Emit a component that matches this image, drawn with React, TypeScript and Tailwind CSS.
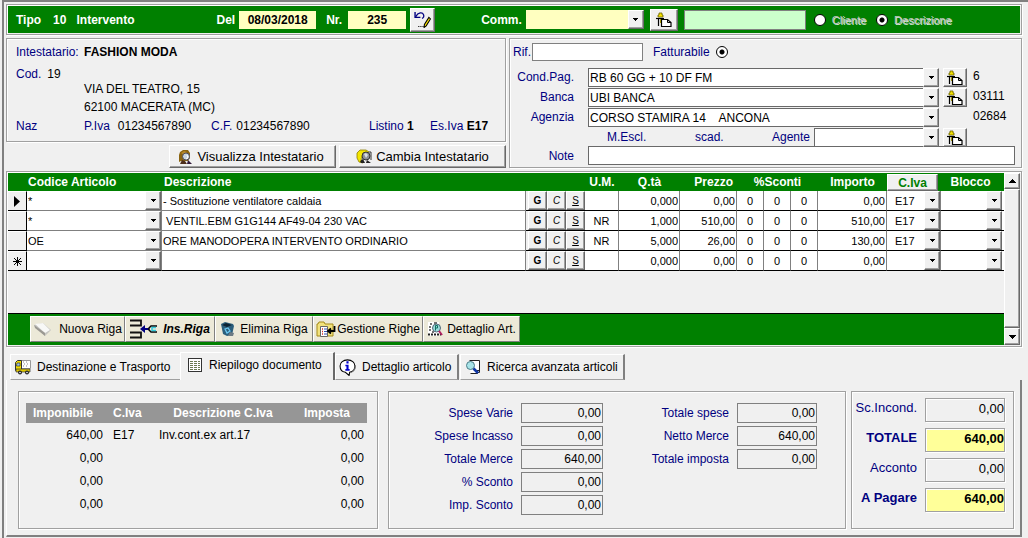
import React from 'react';
import clsx from 'clsx';

const etched =
  'border border-[#a0a0a0] shadow-[inset_1px_1px_0_#fff,1px_1px_0_#fff]';
const raised =
  'border border-t-white border-l-white border-r-[#696969] border-b-[#696969] bg-[#f0f0f0] shadow-[inset_-1px_-1px_0_#a0a0a0] cursor-pointer';

const rows = [
  { code: '*', desc: '- Sostituzione ventilatore caldaia', um: '', qty: '0,000', price: '0,00', total: '0,00', vat: 'E17' },
  { code: '*', desc: ' VENTIL.EBM G1G144 AF49-04 230 VAC', um: 'NR', qty: '1,000', price: '510,00', total: '510,00', vat: 'E17' },
  { code: 'OE', desc: 'ORE MANODOPERA INTERVENTO ORDINARIO', um: 'NR', qty: '5,000', price: '26,00', total: '130,00', vat: 'E17' },
  { code: '', desc: '', um: '', qty: '0,000', price: '0,00', total: '0,00', vat: '' },
];

const vatRows = [
  { base: '640,00', code: 'E17', desc: 'Inv.cont.ex art.17', tax: '0,00' },
  { base: '0,00', code: '', desc: '', tax: '0,00' },
  { base: '0,00', code: '', desc: '', tax: '0,00' },
  { base: '0,00', code: '', desc: '', tax: '0,00' },
];

const expenses = [
  ['Spese Varie', '0,00'],
  ['Spese Incasso', '0,00'],
  ['Totale Merce', '640,00'],
  ['% Sconto', '0,00'],
  ['Imp. Sconto', '0,00'],
];

const totals = [
  ['Totale spese', '0,00'],
  ['Netto Merce', '640,00'],
  ['Totale imposta', '0,00'],
];

/* ---------- icons ---------- */

const Icon = ({ children, size = 16 }: any) => (
  <svg width={size} height={size} viewBox="0 0 16 16" className="shrink-0" aria-hidden="true">
    {children}
  </svg>
);

const Arrow = ({ up }: any) => (
  <svg width="7" height="4" viewBox="0 0 7 4" shapeRendering="crispEdges" aria-hidden="true">
    <path d={up ? 'M0 4h7L3.5 0z' : 'M0 0h7L3.5 4z'} />
  </svg>
);

const PinPageIcon = () => (
  <Icon>
    <path d="M5.500 7.500h6l3.500 3v4H5.500z" fill="#fff" stroke="#000" strokeWidth="1.200" />
    <path d="M11.500 7.500v3H15" fill="none" stroke="#000" />
    <path d="M3 1h3v2h1v2H2V3h1z" fill="#f4e000" stroke="#6b6200" strokeWidth=".8" />
    <path d="M0 6.500h8" stroke="#000" strokeWidth="1.200" />
    <path d="M2.500 7v7" stroke="#000" strokeWidth="1.200" />
    <path d="M4.500 7v4" stroke="#a09400" />
  </Icon>
);

const UndoPencilIcon = () => (
  <Icon size={17}>
    <path d="M1 1v5h5" fill="none" stroke="#000080" strokeWidth="1.300" />
    <path d="M1.500 5.500C4 1 8 1 9 3.500c.6 1.500 0 3-1.500 3.500" fill="none" stroke="#000080" strokeWidth="1.200" />
    <path d="M14 6l1.500 1.500-4 6.500-2 1.500.3-2.800z" fill="#ffe800" stroke="#000" />
    <path d="M4 14.500h1M6 14.500h1M8 14.500h1" stroke="#000" />
  </Icon>
);

const PersonIcon = () => (
  <Icon>
    <path d="M3 3l3-2h5l2 3v5l-2 3H4L2 13V6z" fill="#8a6410" />
    <path d="M4 4l3-2 3 1-3 3z" fill="#b88a2c" />
    <circle cx="9" cy="7.500" r="3.500" fill="#c9d6e0" stroke="#4c4c5c" />
    <path d="M10 6l1 3-2 1" fill="none" stroke="#fff" />
    <path d="M3 15l2-4 3 1 2 3z" fill="#4d2f1c" />
    <path d="M11 11l4 4h-5z" fill="#301838" />
  </Icon>
);

const PersonChangeIcon = () => (
  <Icon>
    <path d="M1 4l3-3h6l3 2-6 3-2 4 2 4-4-1-2-4z" fill="#f4e600" stroke="#8a7c00" strokeWidth=".8" />
    <circle cx="10" cy="7" r="4" fill="#8b8f96" stroke="#333" />
    <path d="M8 5l2-1 2 2-2 3z" fill="#d8dde2" />
    <path d="M4 12l3-2 2 4H5zM11 11l4 3h-5z" fill="#222" />
    <path d="M13 3h2v8" fill="none" stroke="#333" />
  </Icon>
);

const EraserIcon = () => (
  <svg width="20" height="16" viewBox="0 0 20 16" className="shrink-0" aria-hidden="true">
    <path d="M1 4l9-2 8 7-6 6z" fill="#c4c4c0" />
    <path d="M2 3l8-1 7 7-5 3z" fill="#f8f8f6" />
    <path d="M1 4l1 3 10 8v-3z" fill="#9a9892" />
  </svg>
);

const InsertRowIcon = () => (
  <svg width="27" height="20" viewBox="0 0 27 20" className="shrink-0" aria-hidden="true">
    <path d="M0 1.500h11v5H0M0 18.500h11v-5H0" fill="none" stroke="#111" strokeWidth="1.800" />
    <path d="M10 10l5-4v3h4v2h-4v3z" fill="#000080" />
    <path d="M27 7h-6l-2 2v2l2 2h6" fill="none" stroke="#000" strokeWidth="1.500" />
    <path d="M26 8.500h-4v3h4" fill="none" stroke="#30c8d8" strokeWidth="1.500" />
  </svg>
);

const BinIcon = () => (
  <Icon>
    <path d="M1 3l4-2 8 2 1 2-2 9-5 1-4-2z" fill="#2c5f7c" />
    <path d="M2 4l4-2 6 2-5 2z" fill="#0d2433" />
    <path d="M5 8l3-1 2 3-3 2z" fill="none" stroke="#6cc8f0" strokeWidth="1.300" />
    <path d="M10 11l4 1-1 3H8z" fill="#6d7c84" />
  </Icon>
);

const FolderIcon = () => (
  <svg width="20" height="17" viewBox="0 0 20 17" className="shrink-0" aria-hidden="true">
    <path d="M1 3h1l1-2h5l1 2h8v12H1z" fill="#f2e27c" stroke="#a58b18" />
    <path d="M4.500 5.500h7v10h-7z" fill="#fff" stroke="#666" />
    <path d="M6 8h1M6 10.500h1M6 13h1" stroke="#d03020" strokeWidth="1.300" />
    <path d="M8 8h3M8 10.500h3M8 13h3" stroke="#3050b0" />
    <path d="M18.500 5v5h-5M15 7.500l-3 2.500 3 2.500" fill="none" stroke="#000" strokeWidth="1.800" />
  </svg>
);

const DetailIcon = () => (
  <Icon>
    <path d="M1 1h11v14H1z" fill="#fff" />
    <path d="M1 13.500h13" stroke="#222" strokeWidth="2" strokeDasharray="2 1" />
    <path d="M2 9h2M2 6h2M5 11h2M3 3h2M7 2h3" stroke="#444" strokeWidth="1.500" />
    <circle cx="9.500" cy="7" r="4" fill="#9adada" stroke="#567" />
    <path d="M8.500 9.500v-5h2v2.500h-2" fill="none" stroke="#107060" />
    <path d="M12 10l3 4" stroke="#b02060" strokeWidth="2" />
  </Icon>
);

const TruckIcon = () => (
  <Icon>
    <path d="M6.500 1.500h9v8h-9z" fill="#fff" stroke="#999" />
    <path d="M8 3h1M11 3h1M9 5h1M12 5h1M8 7h1M11 7h1" stroke="#888" />
    <path d="M.5 3.500l2-2h4v10h-6z" fill="#f0dc00" stroke="#333" />
    <path d="M2 4h3v3H1.500z" fill="#9fc8e8" stroke="#333" strokeWidth=".7" />
    <path d="M1 10h14v3H1z" fill="#e0c800" stroke="#333" strokeWidth=".7" />
    <circle cx="5" cy="13.500" r="2" fill="#222" />
    <circle cx="12" cy="13.500" r="2" fill="#222" />
    <circle cx="5" cy="13.500" r=".8" fill="#fff" />
    <circle cx="12" cy="13.500" r=".8" fill="#fff" />
  </Icon>
);

const SheetIcon = () => (
  <Icon>
    <g shapeRendering="crispEdges">
      <path d="M1 1h13v13H1z" fill="#fff" />
      <path d="M1 1.500h14M14.500 1v14M1 14.500h14M1.500 1v14" stroke="#333" />
      <path d="M3 4.500h3M7 4.500h3M11 4.500h2M3 6.500h3M7 6.500h3M11 6.500h2M3 8.500h3M7 8.500h3M11 8.500h2M3 10.500h3M7 10.500h3M11 10.500h2M3 12.500h3M7 12.500h3M11 12.500h2" stroke="#6b7a50" />
    </g>
  </Icon>
);

const InfoIcon = () => (
  <Icon size={17}>
    <path d="M8 .8c4 0 7 2.400 7 5.700S12.500 12 10 12.500L9.500 15.500 6 12.500C3 12 1 9.500 1 6.500 1 3.200 4 .8 8 .8z" fill="#fff" stroke="#000" />
    <path d="M15.500 6c.3 4-3 6.500-5 7" fill="none" stroke="#777" />
    <path d="M7 2.200h2v2H7zM6 5.300h3v4h1V11H6V9.300h1V6.800H6z" fill="#0000d0" />
  </Icon>
);

const SearchDocIcon = () => (
  <Icon>
    <path d="M4.500 1.500h10v12h-2v1h-7" fill="#fff" stroke="#222" />
    <path d="M11.500 14.500v-3h3" fill="none" stroke="#222" />
    <circle cx="5.500" cy="6.500" r="4" fill="#a8e4e8" stroke="#4a7c88" />
    <path d="M8.500 9.500l4.500 4.500" stroke="#1038a8" strokeWidth="2.600" />
  </Icon>
);

/* ---------- controls ---------- */

const Combo = ({ id, label, value, className, selectClass = 'pl-px' }: any) => (
  <div className={clsx('relative', className)}>
    <select
      id={id}
      aria-label={label}
      defaultValue={value}
      className={clsx('block h-full w-full appearance-none pr-4 whitespace-pre outline-none', selectClass)}
    >
      <option value={value}>{value}</option>
    </select>
    <span
      className={clsx(raised, 'pointer-events-none absolute right-0 top-0 bottom-0 flex w-4 items-center justify-center')}
    >
      <svg width="5" height="3" viewBox="0 0 5 3" shapeRendering="crispEdges" aria-hidden="true">
        <path d="M0 0h5L2.500 3z" />
      </svg>
    </span>
  </div>
);

const LookupButton = ({ label, className }: any) => (
  <button type="button" aria-label={label} className={clsx(raised, 'flex shrink-0 items-center justify-center', className)}>
    <PinPageIcon />
  </button>
);

const Radio = (props: any) => (
  <input
    type="radio"
    className="h-3 w-3 appearance-none rounded-full border border-black bg-white checked:bg-[radial-gradient(circle,#000_2px,#fff_3px)]"
    {...props}
  />
);

const CellInput = ({ label, value, className }: any) => (
  <input
    aria-label={label}
    defaultValue={value}
    className={clsx('block h-[19px] w-full bg-white px-px outline-none', className)}
  />
);

const AmountRow = ({ label, value }: any) => {
  const id = label.replace(/\W/g, '');
  return (
    <>
      <label htmlFor={id} className="text-right text-[#000080]">
        {label}
      </label>
      <input
        id={id}
        readOnly
        value={value}
        className="h-5 w-full border border-[#808080] px-px text-right outline-none"
      />
    </>
  );
};

const SummaryRow = ({ label, value, strong }: any) => {
  const id = label.replace(/\W/g, '');
  return (
    <div className={clsx('flex items-start justify-end gap-2', strong && 'font-bold')}>
      <label htmlFor={id} className="pt-0.5 text-[#000080]">
        {label}
      </label>
      <input
        id={id}
        readOnly
        value={value}
        className={clsx(etched, 'h-6 w-20 pb-1 text-right outline-none', strong && 'bg-[#ffff99]')}
      />
    </div>
  );
};

const ToolButton = ({ icon, children, className }: any) => (
  <button
    type="button"
    className={clsx(
      'flex h-[26px] items-center justify-center border border-t-white border-l-white border-r-[#808080] border-b-[#808080] bg-[#ece9d8] whitespace-nowrap cursor-pointer',
      className,
    )}
  >
    {icon}
    {children}
  </button>
);

const Tab = ({ icon, children, active, className }: any) => (
  <button
    type="button"
    role="tab"
    aria-selected={Boolean(active)}
    className={clsx(
      'flex items-center gap-1.5 border-l border-t border-white whitespace-nowrap cursor-pointer',
      active ? 'h-7 border-r-2 border-r-[#696969] pb-1' : 'h-[26px] border-b border-b-[#a0a0a0]',
      className,
    )}
  >
    {icon}
    {children}
  </button>
);

/* ---------- sections ---------- */

const TopBar = () => (
  <div className={clsx(etched, 'p-px')}>
    <header className="flex h-[27px] items-center bg-[#008000] pl-2 font-bold text-white">
      <span>Tipo</span>
      <span className="ml-3">10</span>
      <span className="ml-2.5">Intervento</span>
      <label htmlFor="del" className="ml-[82px]">Del</label>
      <input
        id="del"
        defaultValue="08/03/2018"
        className="ml-1 h-[18px] w-[77px] bg-[#ffffc0] text-center text-black outline-none"
      />
      <label htmlFor="nr" className="ml-2.5">Nr.</label>
      <input
        id="nr"
        defaultValue="235"
        className="ml-1.5 h-[18px] w-[58px] bg-[#ffffc0] text-center text-black outline-none"
      />
      <button type="button" aria-label="Modifica numero" className={clsx(raised, 'ml-1 flex h-6 w-[25px] items-center justify-center')}>
        <UndoPencilIcon />
      </button>
      <label htmlFor="comm" className="ml-[46px]">Comm.</label>
      <Combo id="comm" value="" className="ml-1 h-[19px] w-[118px] text-black" selectClass="bg-[#ffffc0]" />
      <LookupButton label="Cerca commessa" className="ml-1.5 h-[22px] w-7" />
      <input
        aria-label="Ricerca"
        className="ml-1.5 h-5 w-[122px] border border-[#808080] bg-[#ccffcc] text-black outline-none"
      />
      <div className="ml-2 flex items-center gap-1.5 text-[11px] font-normal text-[#c4c4c4] [text-shadow:1px_1px_0_#d8e8d8]">
        <Radio id="cliente" name="cerca" />
        <label htmlFor="cliente" className="mr-1">Cliente</label>
        <Radio id="descrizione" name="cerca" defaultChecked />
        <label htmlFor="descrizione">Descrizione</label>
      </div>
    </header>
  </div>
);

const CustomerPanel = () => (
  <div className="flex w-[500px] shrink-0 flex-col">
    <section className={clsx(etched, 'flex h-[104px] flex-col pl-[9px] pt-[5px] leading-4')}>
      <p className="flex">
        <span className="w-[68px] text-[#000080]">Intestatario:</span>
        <b>FASHION MODA</b>
      </p>
      <p className="mt-1.5">
        <span className="mr-1.5 text-[#000080]">Cod.</span>19
      </p>
      <p className="-mt-px pl-[68px]">VIA DEL TEATRO, 15</p>
      <p className="mt-0.5 pl-[68px]">62100 MACERATA (MC)</p>
      <div className="mt-[3px] flex">
        <span className="w-[68px] text-[#000080]">Naz</span>
        <span className="w-[127px]">
          <span className="mr-2 text-[#000080]">P.Iva</span>01234567890
        </span>
        <span className="w-[158px]">
          <span className="mr-1 text-[#000080]">C.F.</span>01234567890
        </span>
        <span className="w-[61px]">
          <span className="text-[#000080]">Listino</span> <b>1</b>
        </span>
        <span>
          <span className="text-[#000080]">Es.Iva</span> <b>E17</b>
        </span>
      </div>
    </section>
    <div className="mt-[3px] flex justify-end gap-[3px] text-[13px]">
      <button type="button" className={clsx(raised, 'flex h-[23px] w-[167px] items-center justify-center gap-1 pr-1')}>
        <PersonIcon />
        Visualizza Intestatario
      </button>
      <button type="button" className={clsx(raised, 'flex h-[23px] w-[167px] items-center justify-center gap-1')}>
        <PersonChangeIcon />
        Cambia Intestatario
      </button>
    </div>
  </div>
);

const PaymentRow = ({ id, label, value, code, lookup }: any) => (
  <div className="flex h-5 items-start">
    <label htmlFor={id} className="w-16 text-right leading-[18px] text-[#000080]">
      {label}
    </label>
    <Combo id={id} value={value} className="ml-[14px] h-[19px] flex-1" selectClass="border border-[#696969] bg-white pl-px" />
    <div className="ml-1 w-6">{lookup && <LookupButton label={`Cerca ${label}`} className="h-[19px] w-6" />}</div>
    <span className="ml-1.5 w-[48px] leading-4">{code}</span>
  </div>
);

const PaymentPanel = () => (
  <section className={clsx(etched, 'min-w-0 flex-1 pt-1')}>
    <div className="mb-[7px] flex items-center text-[#000080]">
      <label htmlFor="rif" className="w-[22px] pl-[3px]">Rif.</label>
      <input id="rif" className="h-[18px] w-[111px] border border-[#808080] bg-white text-black outline-none" />
      <label htmlFor="fatturabile" className="ml-2.5 mr-1.5">Fatturabile</label>
      <Radio id="fatturabile" name="fatturabile" defaultChecked />
    </div>
    <PaymentRow id="condpag" label="Cond.Pag." value="RB 60 GG + 10 DF FM" code="6" lookup />
    <PaymentRow id="banca" label="Banca" value="UBI BANCA" code="03111" lookup />
    <PaymentRow id="agenzia" label="Agenzia" value={'CORSO STAMIRA 14\u00a0\u00a0\u00a0 ANCONA'} code="02684" />
    <div className="flex h-[18px] items-start leading-[18px] text-[#000080]">
      <span className="ml-[97px] w-[88px]">M.Escl.</span>
      <span className="flex-1">scad.</span>
      <label htmlFor="agente">Agente</label>
      <Combo id="agente" value="" className="ml-1 h-[19px] w-[125px]" selectClass="border border-[#696969] bg-white" />
      <LookupButton label="Cerca agente" className="ml-1 mr-[54px] h-[19px] w-6" />
    </div>
    <div className="flex items-center">
      <label htmlFor="note" className="w-16 text-right text-[#000080]">Note</label>
      <input id="note" className="ml-[14px] mr-[6px] h-[19px] flex-1 border border-[#696969] bg-white outline-none" />
    </div>
  </section>
);

const ItemsGrid = () => {
  const num = 'border-b border-r border-b-black border-r-[#808080] bg-white p-0';
  return (
    <table className="w-full table-fixed border-separate border-spacing-0 text-[11px]">
      <colgroup>
        <col className="w-[19px]" />
        <col className="w-[135px]" />
        <col />
        <col className="w-[59px]" />
        <col className="w-[34px]" />
        <col className="w-[61px]" />
        <col className="w-[57px]" />
        <col className="w-[27px]" />
        <col className="w-[27px]" />
        <col className="w-[27px]" />
        <col className="w-[69px]" />
        <col className="w-[54px]" />
        <col className="w-[63px]" />
      </colgroup>
      <thead>
        <tr className="h-[18px] bg-[#008000] text-[12px] leading-4 text-white">
          <th className="p-0" />
          <th className="p-0 pl-px text-left">Codice Articolo</th>
          <th className="p-0 pl-0.5 text-left">Descrizione</th>
          <th className="p-0" />
          <th className="p-0">U.M.</th>
          <th className="p-0">Q.tà</th>
          <th className="p-0 pr-1 text-right">Prezzo</th>
          <th className="p-0" colSpan={3}>%Sconti</th>
          <th className="p-0">Importo</th>
          <th className="p-0">
            <button type="button" className={clsx(raised, 'block h-[17px] w-[51px] leading-4 text-[#008000]')}>
              C.Iva
            </button>
          </th>
          <th className="p-0 pr-1">Blocco</th>
        </tr>
      </thead>
      <tbody>
        {rows.map((row, i) => {
          const last = i === rows.length - 1;
          const line = last ? 'border-b-black' : 'border-b-[#808080]';
          return (
            <tr key={i} className="h-5">
              <td className="border-b border-r border-t border-black border-t-white bg-[#f0f0f0] p-0">
                <div className="flex justify-center">
                  {i === 0 && (
                    <svg width="6" height="11" viewBox="0 0 6 11" aria-hidden="true">
                      <path d="M0 0l6 5.500L0 11z" />
                    </svg>
                  )}
                  {last && (
                    <svg width="9" height="9" viewBox="0 0 9 9" stroke="#000" aria-hidden="true">
                      <path d="M4.500 0v9M0 4.500h9M1 1l7 7M8 1L1 8" />
                    </svg>
                  )}
                </div>
              </td>
              <td className={clsx('border-b border-r border-r-[#808080] bg-white p-0', line)}>
                <Combo label="Codice articolo" value={row.code} className="h-[19px]" />
              </td>
              <td className={clsx('border-b border-r border-r-[#808080] bg-white p-0', line)}>
                <CellInput label="Descrizione" value={row.desc} />
              </td>
              <td className="border-b border-black p-0 pl-0.5">
                <div className="flex text-[10px]">
                  <button type="button" className={clsx(raised, 'h-[19px] w-[19px] font-bold')}>G</button>
                  <button type="button" className={clsx(raised, 'h-[19px] w-[19px] italic')}>C</button>
                  <button type="button" className={clsx(raised, 'h-[19px] w-[19px] underline')}>S</button>
                </div>
              </td>
              <td className={num}>
                <CellInput label="U.M." value={row.um} className="text-center" />
              </td>
              <td className={num}>
                <CellInput label="Quantità" value={row.qty} className="text-right" />
              </td>
              <td className={num}>
                <CellInput label="Prezzo" value={row.price} className="text-right" />
              </td>
              {[1, 2, 3].map((n) => (
                <td key={n} className={num}>
                  <CellInput label={`Sconto ${n}`} value="0" className="text-center" />
                </td>
              ))}
              <td className={num}>
                <CellInput label="Importo" value={row.total} className="text-right" />
              </td>
              <td className={num}>
                <Combo label="Codice Iva" value={row.vat} className="h-[19px]" selectClass="pl-2" />
              </td>
              <td className="border-b border-black bg-white p-0 pr-0.5">
                <Combo label="Blocco" value="" className="h-[19px]" />
              </td>
            </tr>
          );
        })}
      </tbody>
    </table>
  );
};

const ItemsSection = () => (
  <section className={clsx(etched, 'mt-[3px] flex p-px')}>
    <div className="flex min-w-0 flex-1 flex-col">
      <ItemsGrid />
      <div className="mt-[42px] flex border-t border-black bg-[#008000] pb-[3px] pl-[22px] pt-0.5">
        <ToolButton icon={<EraserIcon />} className="w-[95px] gap-1.5">Nuova Riga</ToolButton>
        <ToolButton icon={<InsertRowIcon />} className="w-[90px] gap-1.5">
          <i className="font-bold">Ins.Riga</i>
        </ToolButton>
        <ToolButton icon={<BinIcon />} className="w-[98px] gap-1">Elimina Riga</ToolButton>
        <ToolButton icon={<FolderIcon />} className="w-[110px] gap-px">Gestione Righe</ToolButton>
        <ToolButton icon={<DetailIcon />} className="w-[97px] gap-1">Dettaglio Art.</ToolButton>
      </div>
    </div>
    <div className="flex w-4 flex-col">
      <button type="button" aria-label="Scorri su" className={clsx(raised, 'flex h-4 items-center justify-center')}>
        <Arrow up />
      </button>
      <div className={clsx(raised, 'flex-1')} />
      <button type="button" aria-label="Scorri giù" className={clsx(raised, 'flex h-[17px] items-center justify-center')}>
        <Arrow />
      </button>
    </div>
  </section>
);

const SummaryTabs = () => (
  <section className="mt-[5px]">
    <div role="tablist" className="flex items-end pl-1">
      <Tab icon={<TruckIcon />} className="w-[170px] pl-1">Destinazione e Trasporto</Tab>
      <Tab icon={<SheetIcon />} active className="w-[155px] pl-1.5">Riepilogo documento</Tab>
      <Tab icon={<InfoIcon />} className="w-[124px] border-r-2 border-r-[#808080] pl-[3px]">Dettaglio articolo</Tab>
      <Tab icon={<SearchDocIcon />} className="ml-px w-[165px] border-r-2 border-r-[#808080] pl-1">
        Ricerca avanzata articoli
      </Tab>
    </div>
    <div className="flex border-b-2 border-l border-r-2 border-b-[#808080] border-l-white border-r-[#808080] pb-[6px] pl-[11px] pr-[6px] pt-[11px]">
      <div className={clsx(etched, 'h-[138px] w-[360px] pl-[7px] pr-2.5 pt-[11px]')}>
        <table className="w-full table-fixed">
          <colgroup>
            <col className="w-[83px]" />
            <col className="w-[50px]" />
            <col />
            <col className="w-[80px]" />
          </colgroup>
          <thead>
            <tr className="h-5 bg-[#969696] text-white">
              <th className="p-0 pl-[7px] text-left">Imponibile</th>
              <th className="p-0 pl-1 text-left">C.Iva</th>
              <th className="p-0">Descrizione C.Iva</th>
              <th className="p-0">Imposta</th>
            </tr>
          </thead>
          <tbody>
            {vatRows.map((row, i) => (
              <tr key={i} className="h-[23px]">
                <td className="p-0 pr-1.5 text-right">{row.base}</td>
                <td className="p-0 pl-1">{row.code}</td>
                <td className="p-0">{row.desc}</td>
                <td className="p-0 pr-[3px] text-right">{row.tax}</td>
              </tr>
            ))}
          </tbody>
        </table>
      </div>
      <div className={clsx(etched, 'ml-2.5 flex flex-1 items-start pt-[11px]')}>
        <div className="grid grid-cols-[124px_82px] items-center gap-x-2 gap-y-[3px]">
          {expenses.map(([label, value]) => (
            <AmountRow key={label} label={label} value={value} />
          ))}
        </div>
        <div className="grid grid-cols-[126px_80px] items-center gap-x-2 gap-y-[3px]">
          {totals.map(([label, value]) => (
            <AmountRow key={label} label={label} value={value} />
          ))}
        </div>
      </div>
      <div className={clsx(etched, 'ml-[5px] flex w-[163px] flex-col gap-1.5 pr-2 pt-1.5 text-[13px]')}>
        <SummaryRow label="Sc.Incond." value="0,00" />
        <SummaryRow label="TOTALE" value="640,00" strong />
        <SummaryRow label="Acconto" value="0,00" />
        <SummaryRow label="A Pagare" value="640,00" strong />
      </div>
    </div>
  </section>
);

const App = () => {
  return (
    <div className="min-h-screen bg-[#f0f0f0] pl-0.5 font-['Liberation_Sans',Arial,sans-serif] text-[12px] leading-4 text-black">
      <main className="min-h-screen border-l-2 border-t-2 border-[#808080] pl-0.5 pr-1.5 pt-0.5">
        <TopBar />
        <div className="mt-[3px] flex gap-[3px]">
          <CustomerPanel />
          <PaymentPanel />
        </div>
        <ItemsSection />
        <SummaryTabs />
      </main>
    </div>
  );
};

export default App;
